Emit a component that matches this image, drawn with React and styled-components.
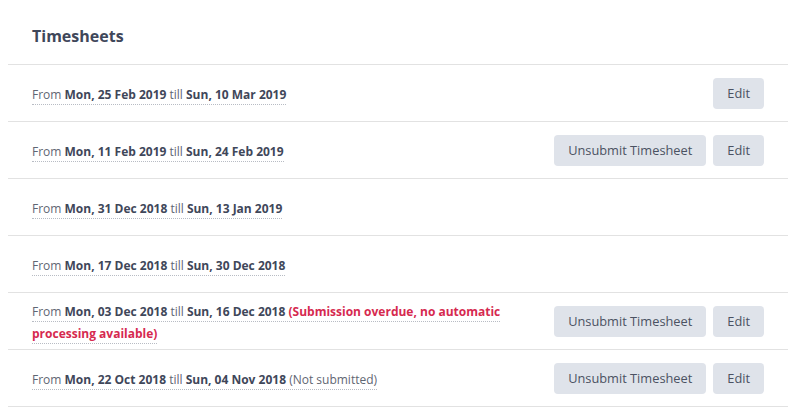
import React from 'react';
import styled, { createGlobalStyle } from 'styled-components';

const GlobalStyle = createGlobalStyle`
    body {
        margin: 0;
        background: #fff;
        font-family: "Open Sans", "Noto Sans", sans-serif;
    }
`;

const Page = styled.div`
    padding: 0 8px;
`;

const Header = styled.div`
    height: 65px;
    display: flex;
    align-items: center;
    padding: 0 24px;
    border-bottom: 1px solid #e2e2e2;
    box-sizing: border-box;
`;

const Title = styled.h2`
    margin: 8px 0 0;
    font-size: 16px;
    font-weight: 700;
    color: #3f475a;
`;

const List = styled.ul`
    list-style: none;
    margin: 0;
    padding: 0;
`;

const Row = styled.li`
    min-height: 57px;
    box-sizing: border-box;
    display: flex;
    align-items: center;
    justify-content: space-between;
    gap: 24px;
    padding: 0 24px;
    border-bottom: 1px solid #e2e2e2;
`;

const Period = styled.div`
    margin-top: 4px;
    font-size: 12px;
    line-height: 22px;
    color: #5f6673;
    max-width: 480px;
`;

const Underlined = styled.span`
    border-bottom: 1px dotted #b8bcc4;
    padding-bottom: 1px;
`;

const Date = styled.b`
    font-weight: 700;
    color: #3f475a;
`;

const Note = styled.span`
    font-weight: ${p => (p.$alert ? 700 : 400)};
    color: ${p => (p.$alert ? '#d6294f' : '#5f6673')};
`;

const Actions = styled.div`
    display: flex;
    gap: 7px;
    flex-shrink: 0;
`;

const Button = styled.button`
    height: 31px;
    padding: 0 14px;
    border: none;
    border-radius: 4px;
    background: #dfe3ea;
    color: #4b5262;
    font-family: inherit;
    font-size: 12.8px;
    cursor: pointer;
`;

const rows = [
    { from: 'Mon, 25 Feb 2019', till: 'Sun, 10 Mar 2019', unsubmit: false, edit: true },
    { from: 'Mon, 11 Feb 2019', till: 'Sun, 24 Feb 2019', unsubmit: true, edit: true },
    { from: 'Mon, 31 Dec 2018', till: 'Sun, 13 Jan 2019' },
    { from: 'Mon, 17 Dec 2018', till: 'Sun, 30 Dec 2018' },
    { from: 'Mon, 03 Dec 2018', till: 'Sun, 16 Dec 2018', note: '(Submission overdue, no automatic processing available)', alert: true, unsubmit: true, edit: true },
    { from: 'Mon, 22 Oct 2018', till: 'Sun, 04 Nov 2018', note: '(Not submitted)', unsubmit: true, edit: true },
];

const App = () => {
    return <React.Fragment>
        <GlobalStyle />
        <Page>
            <Header>
                <Title>Timesheets</Title>
            </Header>
            <List>
                {rows.map((r, i) => (
                    <Row key={i}>
                        <Period>
                            <Underlined>
                                From <Date>{r.from}</Date> till <Date>{r.till}</Date>
                                {r.note && <> <Note $alert={r.alert}>{r.note}</Note></>}
                            </Underlined>
                        </Period>
                        <Actions>
                            {r.unsubmit && <Button>Unsubmit Timesheet</Button>}
                            {r.edit && <Button>Edit</Button>}
                        </Actions>
                    </Row>
                ))}
            </List>
        </Page>
    </React.Fragment>
}

export default App;
